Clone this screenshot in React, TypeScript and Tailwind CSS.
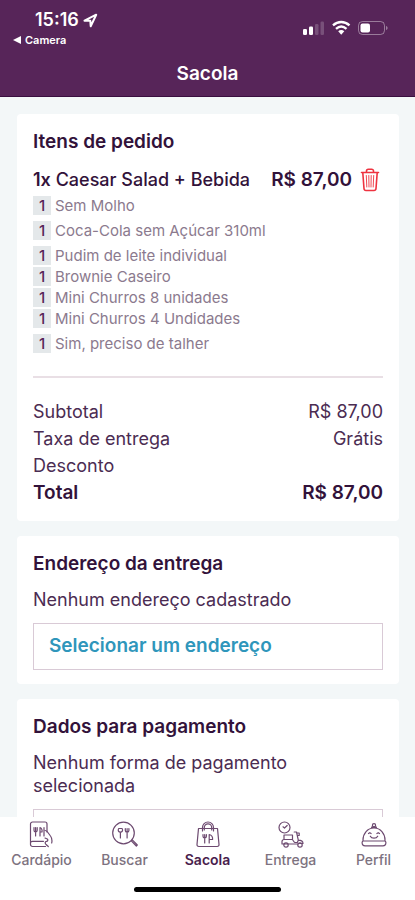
import type { ReactNode } from 'react'

const EXTRA_GROUPS = [
  [{ qty: 1, name: 'Sem Molho' }],
  [{ qty: 1, name: 'Coca-Cola sem Açúcar 310ml' }],
  [
    { qty: 1, name: 'Pudim de leite individual' },
    { qty: 1, name: 'Brownie Caseiro' },
    { qty: 1, name: 'Mini Churros 8 unidades' },
    { qty: 1, name: 'Mini Churros 4 Undidades' },
  ],
  [{ qty: 1, name: 'Sim, preciso de talher' }],
]

const TOTALS = [
  { label: 'Subtotal', value: 'R$ 87,00' },
  { label: 'Taxa de entrega', value: 'Grátis' },
  { label: 'Desconto', value: '' },
]

const TABS = [
  { label: 'Cardápio', icon: <MenuIcon /> },
  { label: 'Buscar', icon: <SearchIcon /> },
  { label: 'Sacola', icon: <BagIcon />, active: true },
  { label: 'Entrega', icon: <ScooterIcon /> },
  { label: 'Perfil', icon: <ProfileIcon /> },
]

function TabIcon({ children }: { children: ReactNode }) {
  return (
    <svg className="h-7 w-7" viewBox="0 0 28 28" fill="none" stroke="currentColor" strokeWidth="1.2" strokeLinecap="round" strokeLinejoin="round" aria-hidden="true">
      {children}
    </svg>
  )
}

function MenuIcon() {
  return (
    <TabIcon>
      <path d="M17.500 25.500H4.500a2 2 0 0 1-2-2V3a2 2 0 0 1 2-2H17a2 2 0 0 1 2 2v8M2.500 22c0-1.200.8-1.700 2-1.700h11" />
      <path d="M6 6.500v2.700a1.600 1.600 0 0 0 3.200 0V6.500M7.600 6.500v8.500M12 15V6.500c1.800.5 2.400 3 2 4.500h-2M16 6.500v8.500" />
      <path d="M17 9.500c1.500 0 2 .8 2.500 1.500l3 4c1.200 1.500 1.500 3 1.500 5l-.3 2M17 17l2.300 1c1 .8.500 2.300-.8 2.300-1.500 0-1.700 1.900-.7 2.900l2.500 2.300" />
    </TabIcon>
  )
}

function SearchIcon() {
  return (
    <TabIcon>
      <circle cx="12.500" cy="12" r="10.800" />
      <path d="M20.300 19.800l1-1 5 5.200-1 1z" />
      <path d="M7.700 7.500c-1.200 2 0 3.700 1.700 3.700s2.900-1.700 1.700-3.700zM9.400 11.200V17M14.300 7.500v2c0 2.200 3.600 2.200 3.600 0v-2M16.100 7.500V17" />
    </TabIcon>
  )
}

function BagIcon() {
  return (
    <TabIcon>
      <path d="M4.500 7.500h19L25 23.500c.1 1.200-.6 2-1.800 2H4.800c-1.200 0-1.900-.8-1.800-2z" />
      <path d="M8.500 10V6.500a5.500 5.500 0 0 1 11 0V10M10.300 9V6.500a3.700 3.700 0 0 1 7.400 0V9" />
      <path d="M9 13.500v1.700a1.700 1.700 0 0 0 3.400 0v-1.700M10.700 13.500V22M15.200 22v-8.500c2.500.6 3.600 2.700 3.400 5h-3.400" />
    </TabIcon>
  )
}

function ScooterIcon() {
  return (
    <TabIcon>
      <circle cx="7.500" cy="6.500" r="5.500" />
      <path d="M7.500 7l2.700-2.500M7.500 7L6 5.800" />
      <path d="M7 14h8.500v4.500H7zM5 20.500c0-1.300 1-2 2.500-2h7.200c1.800 0 2 3 3.300 3h2.300l1-2.300-1.800-8.200h-2.300M20 12h2.200v2.500h-1.500M21.300 19.200c3 0 4.700 1.300 4.700 3.300h-3.500M5 20.500V23h16" />
      <circle cx="9" cy="24" r="2.200" />
      <circle cx="23" cy="24" r="2.200" />
    </TabIcon>
  )
}

function ProfileIcon() {
  return (
    <TabIcon>
      <circle cx="14" cy="4.200" r="1.600" />
      <path d="M11.500 6.200h5M3 20v-1C3 12.500 7.500 7 14 7s11 5.500 11 12v1M3.500 20h21a1.500 1.500 0 0 1 1.400 1.500c0 2-1.200 3.300-3 3.300H5.100c-1.800 0-3-1.300-3-3.300a1.500 1.500 0 0 1 1.400-1.500z" />
      <path d="M8.500 12.500l1.300-.8 1.300.8M16.900 12.500l1.300-.8 1.300.8M10.300 15.200c1.300 2.600 6.100 2.600 7.400 0" />
    </TabIcon>
  )
}

function TrashIcon() {
  return (
    <svg className="h-6 w-5" viewBox="0 0 20 24" fill="none" stroke="currentColor" strokeWidth="1.600" strokeLinecap="round" strokeLinejoin="round" aria-hidden="true">
      <path d="M1.500 4.500h17M6.500 4.500V3A1.800 1.800 0 0 1 8.300 1.200h3.400A1.800 1.800 0 0 1 13.500 3v1.500M2.800 4.800l1.200 15.700c.1 1.300.9 2 2 2h8c1.100 0 1.900-.7 2-2l1.200-15.700" />
      <path d="M6.300 7.500l.5 11.500M8.800 7.500l.2 11.500M11.200 7.500L11 19M13.700 7.500l-.5 11.500" strokeWidth=".9" />
    </svg>
  )
}

function StatusBar() {
  return (
    <div className="flex h-[52px] items-start justify-between pt-[9px] pr-[27px] pl-[13px]">
      <div>
        <div className="flex items-center gap-1 pl-[22px] text-lg leading-[22px] font-semibold">
          15:16
          <svg className="h-[15px] w-[15px]" viewBox="0 0 15 15" fill="none" stroke="currentColor" strokeWidth="2" strokeLinejoin="round" aria-hidden="true">
            <path d="M1.500 7.700L13.200 1.700 7.700 13.300l-.4-5.600z" />
          </svg>
        </div>
        <button type="button" className="flex items-center gap-1 text-[11px] leading-[18px] font-semibold">
          <svg className="h-2 w-2" viewBox="0 0 8 8" fill="currentColor" aria-hidden="true">
            <path d="M0 4l8-4v8z" />
          </svg>
          Camera
        </button>
      </div>
      <svg className="mt-[11px] h-4 w-[85px]" viewBox="0 0 85 16" fill="currentColor" aria-hidden="true">
        <rect x="0" y="9" width="4" height="6" rx="1.300" />
        <rect x="6" y="6.500" width="4" height="8.500" rx="1.300" />
        <rect x="12" y="4" width="3.500" height="11" rx="1.300" opacity=".2" />
        <rect x="17.500" y="1.500" width="3.500" height="13.500" rx="1.300" opacity=".2" />
        <g fill="none" stroke="currentColor" strokeWidth="2.400">
          <path d="M30 5.300c5-4.400 11.500-4.400 16.500 0" />
          <path d="M33 8.900c3.200-2.800 7.300-2.800 10.500 0" />
        </g>
        <path d="M35.200 11.200c1.900-1.700 4.200-1.700 6.100 0l-3.050 3.600z" />
        <rect x="55.500" y="1.500" width="26" height="13" rx="4" fill="none" stroke="currentColor" opacity=".4" />
        <path d="M83 6v4c1-.3 1.600-1 1.600-2s-.6-1.700-1.600-2z" opacity=".4" />
        <rect x="57.500" y="3.500" width="9.500" height="9" rx="2" />
      </svg>
    </div>
  )
}

function Card({ title, children }: { title: string; children: ReactNode }) {
  return (
    <section className="rounded-sm bg-white px-4 pt-4 pb-[14px]">
      <h2 className="text-[19px] leading-6 font-semibold">{title}</h2>
      {children}
    </section>
  )
}

function SelectButton({ label, children }: { label?: string; children?: ReactNode }) {
  return (
    <button
      type="button"
      aria-label={label}
      className="mt-3 block h-[47px] w-full border border-[#d9cad6] px-[15px] text-left text-[19px] font-semibold text-[#2f96bb]"
    >
      {children}
    </button>
  )
}

export default function App() {
  return (
    <div className="flex h-screen flex-col bg-[#f3f7f8] font-['Inter',sans-serif] text-[#32123a]">
      <header className="border-b border-[#3a0f40] bg-[#572559] text-white">
        <StatusBar />
        <h1 className="h-11 text-center text-[19px] leading-[44px] font-semibold">Sacola</h1>
      </header>

      <main className="flex-1 space-y-[15px] overflow-y-auto py-[17px] pr-4 pl-[17px] [scrollbar-width:none]">
        <Card title="Itens de pedido">
          <div className="mt-[14px] flex items-center text-lg leading-6">
            <h3 className="flex-1 whitespace-nowrap font-medium">
              <span className="font-semibold">1x</span> Caesar Salad + Bebida
            </h3>
            <span className="text-[19px] font-semibold whitespace-nowrap">R$ 87,00</span>
            <button type="button" aria-label="Remover item" className="mr-[3px] ml-2 text-[#ee3340]">
              <TrashIcon />
            </button>
          </div>
          <div className="mt-[3px] space-y-1">
            {EXTRA_GROUPS.map(group => (
              <ul key={group[0].name}>
                {group.map(extra => (
                  <li key={extra.name} className="flex h-[21px] items-center gap-1 text-[15px] leading-5 text-[#8b7a8e]">
                    <span className="h-[19px] w-[18px] bg-[#e4e8ea] text-center leading-[19px] font-medium text-[#572559]">{extra.qty}</span>
                    {extra.name}
                  </li>
                ))}
              </ul>
            ))}
          </div>
          <hr className="mt-[22px] mb-5 border-t-2 border-[#e9dfe5]" />
          <dl className="text-lg leading-[27px]">
            {TOTALS.map(row => (
              <div key={row.label} className="flex justify-between text-[#4b2c52]">
                <dt>{row.label}</dt>
                <dd>{row.value}</dd>
              </div>
            ))}
            <div className="flex justify-between text-[19px] leading-7 font-semibold">
              <dt>Total</dt>
              <dd>R$ 87,00</dd>
            </div>
          </dl>
        </Card>

        <Card title="Endereço da entrega">
          <p className="mt-3 text-lg leading-[23px] text-[#4b2c52]">Nenhum endereço cadastrado</p>
          <SelectButton>Selecionar um endereço</SelectButton>
        </Card>

        <Card title="Dados para pagamento">
          <p className="mt-3 text-lg leading-[23px] text-[#4b2c52]">Nenhum forma de pagamento selecionada</p>
          <SelectButton label="Selecionar forma de pagamento" />
        </Card>
      </main>

      <nav className="bg-white pb-2">
        <div className="grid grid-cols-5 pt-1">
          {TABS.map(tab => (
            <a
              key={tab.label}
              href="#"
              aria-current={tab.active ? 'page' : undefined}
              className={`flex flex-col items-center text-sm leading-[22px] ${tab.active ? 'font-semibold text-[#4a1e4d]' : 'font-medium text-[#7d7280]'}`}
            >
              <span className="text-[#6d4a70]">{tab.icon}</span>
              {tab.label}
            </a>
          ))}
        </div>
        <div className="mx-auto mt-4 h-[5px] w-[147px] rounded-full bg-black" />
      </nav>
    </div>
  )
}
